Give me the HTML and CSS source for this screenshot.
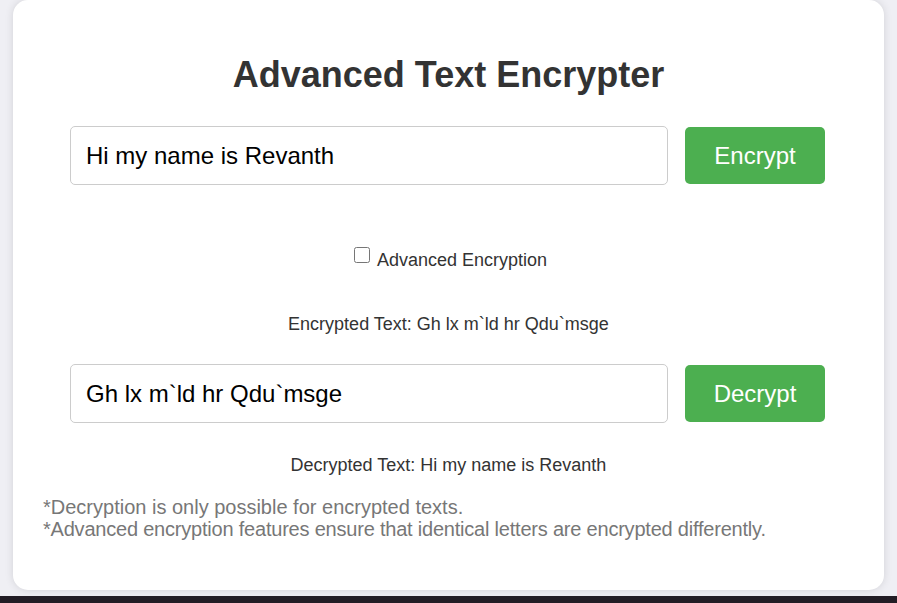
FILE: index.html
```html
<!DOCTYPE html>
<html lang="en">
<head>
<meta charset="utf-8">
<title>Advanced Text Encrypter</title>
<link rel="stylesheet" href="styles.css">
</head>
<body>
<div class="page">
  <main class="card">
    <h1 class="title">Advanced Text Encrypter</h1>
    <div class="row">
      <input class="field" type="text" value="Hi my name is Revanth">
      <button class="btn" type="button">Encrypt</button>
    </div>
    <div class="option">
      <label class="option-label"><input class="check" type="checkbox"> Advanced Encryption</label>
    </div>
    <p class="result result-enc">Encrypted Text: Gh lx m`ld hr Qdu`msge</p>
    <div class="row row-second">
      <input class="field" type="text" value="Gh lx m`ld hr Qdu`msge">
      <button class="btn" type="button">Decrypt</button>
    </div>
    <p class="result result-dec">Decrypted Text: Hi my name is Revanth</p>
    <div class="notes">
      <p class="note">*Decryption is only possible for encrypted texts.</p>
      <p class="note note-long">*Advanced encryption features ensure that identical letters are encrypted differently.</p>
    </div>
  </main>
</div>
<div class="strip"></div>
</body>
</html>
```
FILE: styles.css
```css
html, body {
  margin: 0;
  padding: 0;
}
body {
  background: #1f1b22;
  font-family: "Liberation Sans", Arial, sans-serif;
  color: #333;
  overflow: hidden;
}
.page {
  background: #efeff4;
  padding: 0 13px 6px;
}
.card {
  background: #fff;
  border-radius: 15px;
  box-shadow: 0 0 8px rgba(0, 0, 0, 0.12);
  padding: 54px 30px 51px;
  box-sizing: border-box;
  height: 590px;
}
.title {
  margin: 0;
  font-size: 36px;
  font-weight: bold;
  text-align: center;
  color: #333;
  line-height: 41px;
}
.row {
  display: flex;
  justify-content: center;
  align-items: center;
  gap: 17px;
  margin-top: 31px;
  padding-right: 2px;
}
.row-second {
  margin-top: 29px;
}
.field {
  width: 598px;
  box-sizing: border-box;
  height: 59px;
  padding: 0 15px;
  font-family: "Liberation Sans", Arial, sans-serif;
  font-size: 24px;
  color: #000;
  border: 1px solid #ccc;
  border-radius: 5px;
  outline: none;
}
.btn {
  width: 140px;
  height: 57px;
  border: none;
  border-radius: 5px;
  background: #4caf50;
  color: #fff;
  font-family: "Liberation Sans", Arial, sans-serif;
  font-size: 24px;
  padding: 0;
}
.option {
  text-align: center;
  margin-top: 59px;
  font-size: 18px;
  line-height: 21px;
}
.check {
  width: 16px;
  height: 16px;
  margin: 3px 3px 3px 4px;
  vertical-align: 3px;
}
.result {
  margin: 43px 0 0;
  text-align: center;
  font-size: 18px;
  line-height: 21px;
}
.result-dec {
  margin-top: 32px;
}
.notes {
  margin-top: 20px;
}
.note {
  margin: 0;
  font-size: 20px;
  line-height: 22px;
  color: #777;
}
.note-long {
  letter-spacing: -0.21px;
}
.strip {
  height: 7px;
  background: #221d25;
}
```
